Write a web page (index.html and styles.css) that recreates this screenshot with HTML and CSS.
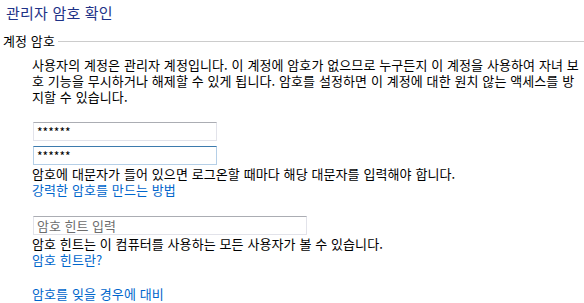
FILE: index.html
```
<!DOCTYPE html>
<html lang="ko">
<head>
  <meta charset="UTF-8">
  <title>관리자 암호 확인</title>
  <link rel="stylesheet" href="styles.css">
</head>
<body>
  <h1 class="title">관리자 암호 확인</h1>

  <div class="group-head">계정 암호</div>

  <div class="group">
    <p class="intro">사용자의 계정은 관리자 계정입니다. 이 계정에 암호가 없으므로 누구든지 이 계정을 사용하여 자녀 보호 기능을 무시하거나 해제할 수 있게 됩니다. 암호를 설정하면 이 계정에 대한 원치 않는 액세스를 방지할 수 있습니다.</p>

    <div class="fields">
      <input class="field" type="text" value="******">
      <input class="field focused" type="text" value="******">
    </div>
    <p class="note">암호에 대문자가 들어 있으면 로그온할 때마다 해당 대문자를 입력해야 합니다.<br><a class="link" href="#">강력한 암호를 만드는 방법</a></p>

    <input class="field hint" type="text" placeholder="암호 힌트 입력">
    <p class="note">암호 힌트는 이 컴퓨터를 사용하는 모든 사용자가 볼 수 있습니다.<br><a class="link" href="#">암호 힌트란?</a></p>

    <a class="link last" href="#">암호를 잊을 경우에 대비</a>
  </div>
</body>
</html>
```

FILE: styles.css
```
body {
  margin: 0;
  font-family: "Noto Sans CJK KR", "Noto Sans", sans-serif;
  font-size: 13px;
  line-height: 16px;
  letter-spacing: 0.1px;
  color: #000;
  background: #fff;
  width: 584px;
  height: 303px;
  overflow: hidden;
}

.title {
  margin: 0;
  padding: 3px 6px 0;
  font-size: 15px;
  font-weight: normal;
  line-height: 20px;
  letter-spacing: 0.2px;
  color: #1e3287;
}

/* section header with the rule running to the right */
.group-head {
  display: flex;
  align-items: center;
  gap: 3px;
  margin-top: 10px;
  padding-left: 3px;
}

.group-head::after {
  content: "";
  flex: 1;
  border-top: 1px solid #cccccc;
}

.group {
  display: flex;
  flex-direction: column;
  align-items: flex-start;
  padding-left: 32px;
  padding-right: 4px;
}

.intro {
  margin: 8px 0 0;
}

.fields {
  display: flex;
  flex-direction: column;
  gap: 5px;
  margin-top: 17px;
  margin-left: 1px;
}

.field {
  box-sizing: border-box;
  width: 184px;
  height: 19px;
  margin: 0;
  padding: 0 3px;
  font-family: inherit;
  font-size: 12px;
  color: #000;
  border: 1px solid #e2e3ea;
  border-top-color: #abadb3;
  outline: none;
}

.field.focused {
  border-color: #b5cfe7;
  border-top-color: #3d7bad;
}

.field.hint {
  width: 274px;
  margin-top: 18px;
  margin-left: 1px;
  font-size: 13px;
}

.field::placeholder {
  color: #6d6d6d;
}

.note {
  margin: 1px 0 0;
}

.link {
  color: #0066cc;
  text-decoration: none;
}

.link.last {
  margin-top: 18px;
}
```
